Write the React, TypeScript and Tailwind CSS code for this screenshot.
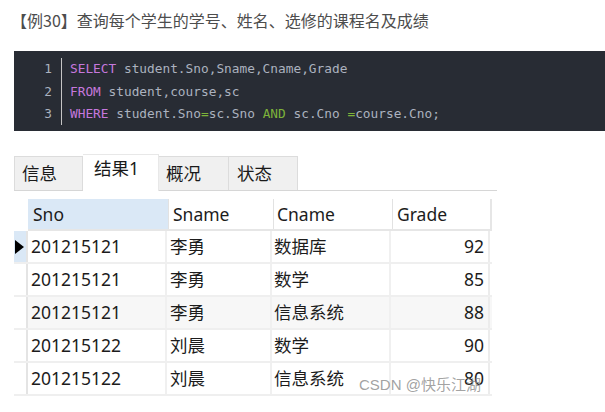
import React from "react";

const rows = [
  { sno: "201215121", sname: "李勇", cname: "数据库", grade: "92" },
  { sno: "201215121", sname: "李勇", cname: "数学", grade: "85" },
  { sno: "201215121", sname: "李勇", cname: "信息系统", grade: "88" },
  { sno: "201215122", sname: "刘晨", cname: "数学", grade: "90" },
  { sno: "201215122", sname: "刘晨", cname: "信息系统", grade: "80" },
];

const K = ({ children }: { children: React.ReactNode }) => (
  <span className="text-[#c678dd]">{children}</span>
);
const G = ({ children }: { children: React.ReactNode }) => (
  <span className="text-[#7db33a]">{children}</span>
);

export default function App() {
  const cjk = { fontFamily: '"Noto Sans", "Noto Sans CJK SC", sans-serif' };
  return (
    <div
      className="relative w-[605px] h-[412px] overflow-hidden bg-white"
      style={{ fontFamily: '"Noto Sans CJK SC", "Noto Sans", sans-serif' }}
    >
      {/* Title */}
      <div className="pt-[8px] pl-[11px] h-[51px] text-[16px] leading-[24px] text-[#4d4d4d]">
        【例30】查询每个学生的学号、姓名、选修的课程名及成绩
      </div>

      {/* Code block */}
      <div
        className="ml-[14px] h-[80px] bg-[#282c34] pt-[7px] flex text-[12.8px] leading-[22.5px] text-[#abb2bf]"
        style={{ fontFamily: '"DejaVu Sans Mono", "Liberation Mono", monospace' }}
      >
        <div className="w-[47px] pr-[9px] text-right text-[#abb2bf]">
          <div>1</div>
          <div>2</div>
          <div>3</div>
        </div>
        <div className="border-l border-[#c5c5c5] pl-[8px] h-[67px] whitespace-pre">
          <div>
            <K>SELECT</K> student.Sno,Sname,Cname,Grade
          </div>
          <div>
            <K>FROM</K> student,course,sc
          </div>
          <div>
            <K>WHERE</K> student.Sno<G>=</G>sc.Sno <G>AND</G> sc.Cno <G>=</G>course.Cno;
          </div>
        </div>
      </div>

      {/* Tabs */}
      <div
        className="mt-[24px] ml-[14px] w-[483px] h-[36px] flex items-end border-b border-[#d6d6d6] text-[17.5px] text-[#1a1a1a]"
        style={cjk}
      >
        <div className="w-[69px] h-[34px] bg-[#f0f0f0] border border-b-0 border-[#dcdcdc] pl-[7px] flex items-center leading-none">
          信息
        </div>
        <div className="w-[76px] h-[37px] -mb-px bg-white border-t border-r border-[#e8e8e8] pl-[11px] pb-[8px] flex items-center leading-none">
          结果1
        </div>
        <div className="w-[70px] h-[34px] bg-[#f0f0f0] border border-b-0 border-l-0 border-[#dcdcdc] pl-[7px] flex items-center leading-none">
          概况
        </div>
        <div className="w-[69px] h-[34px] bg-[#f0f0f0] border border-b-0 border-l-0 border-[#dcdcdc] pl-[8px] flex items-center leading-none">
          状态
        </div>
      </div>

      {/* Table */}
      <div className="mt-[8px] ml-[14px] w-[478px] text-[17.5px] text-[#1c1c1c]" style={cjk}>
        {/* Header */}
        <div className="flex h-[32px] border-b-2 border-[#e6e6e6] ml-[14px]">
          <div className="w-[141px] bg-[#dae8f6] pl-[5px] flex items-center border-r border-[#e2e2e2]">Sno</div>
          <div className="w-[105px] pl-[4px] flex items-center border-r border-[#e2e2e2]">Sname</div>
          <div className="w-[119px] pl-[3px] flex items-center border-r border-[#e2e2e2]">Cname</div>
          <div className="w-[99px] pl-[4px] flex items-center border-r-2 border-[#e6e6e6]">Grade</div>
        </div>
        {rows.map((r, i) => (
          <div
            key={i}
            className="flex h-[33px] border-b-2 border-[#efefef]"
          >
            <div
              className={
                "w-[14px] border-r-2 border-[#e4e4e4] flex items-center " +
                (i === 0 ? "bg-[#dae8f6]" : "bg-white")
              }
            >
              {i === 0 && (
                <svg width="10" height="14" viewBox="0 0 10 14" className="ml-[1px]">
                  <polygon points="0,0 9,7 0,14" fill="#000" />
                </svg>
              )}
            </div>
            <div className={"flex flex-1 " + (i === 2 ? "bg-[#f7f7f7]" : "bg-white")}>
              <div className="w-[139px] pl-[3px] flex items-center border-r-2 border-[#f0f0f0]">{r.sno}</div>
              <div className="w-[105px] pl-[3px] flex items-center border-r-2 border-[#f0f0f0]">{r.sname}</div>
              <div className="w-[119px] pl-[2px] flex items-center border-r-2 border-[#f0f0f0]">{r.cname}</div>
              <div className="w-[99px] pr-[4px] flex items-center justify-end border-r-2 border-[#ececec]">{r.grade}</div>
            </div>
          </div>
        ))}
      </div>

      {/* Watermark */}
      <div
        className="absolute left-[359px] top-[375px] text-[15px] leading-[20px] text-[#8a8a8a]/80 whitespace-nowrap"
        style={{ fontFamily: '"Liberation Sans", "Noto Sans CJK SC", sans-serif' }}
      >
        CSDN @快乐江湖
      </div>
    </div>
  );
}
